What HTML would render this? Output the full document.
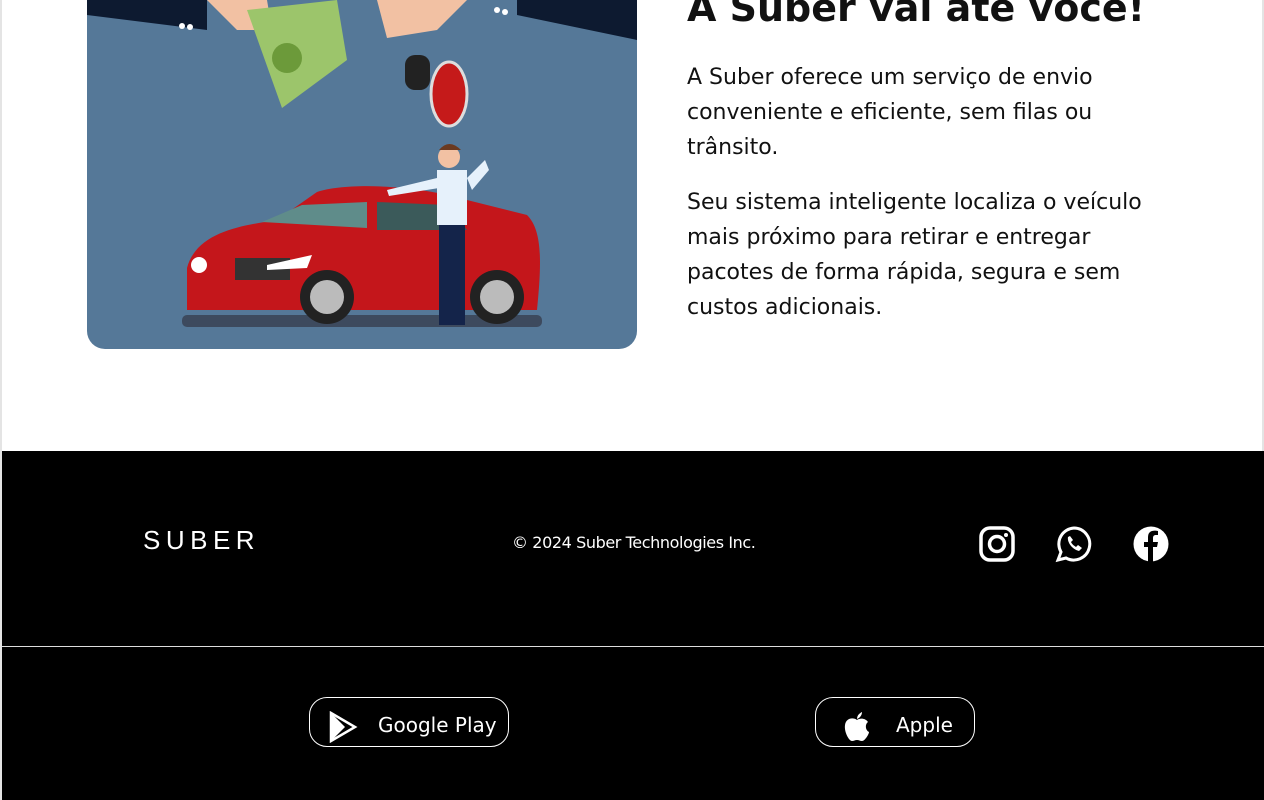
<!DOCTYPE html>
<html><head><meta charset="utf-8"><style>
*{margin:0;padding:0;box-sizing:border-box}
body{width:1264px;height:800px;overflow:hidden;background:#fff;font-family:"DejaVu Sans","Liberation Sans",sans-serif;position:relative}
.edge{position:absolute;top:0;bottom:0;width:2px;background:#e4e4e4}
.img{position:absolute;left:87px;top:-10px;width:550px;height:359px;border-radius:0 0 18px 18px;background:#557898;overflow:hidden}
h1{position:absolute;left:687px;top:-14px;font-size:38px;font-weight:bold;color:#111;white-space:nowrap}
p{position:absolute;left:687px;width:470px;font-size:22px;line-height:35px;color:#111}
footer{position:absolute;left:2px;right:0;top:451px;height:349px;background:#000}
.line{position:absolute;left:0;right:0;top:195px;height:1px;background:#ddd}
.logo{position:absolute;left:141px;top:74px;color:#fff;font-family:"Liberation Sans",sans-serif;font-size:26px;letter-spacing:5.5px}
.copy{position:absolute;left:510px;top:82px;color:#fff;font-size:16px;letter-spacing:-.4px}
.btn{position:absolute;top:246px;height:50px;border:1px solid #fff;border-radius:18px;color:#fff;font-size:20px}
.btn span{position:absolute;top:15px;white-space:nowrap}
</style></head><body>
<div class="edge" style="left:0"></div><div class="edge" style="right:0"></div>
<div class="img"><svg width="550" height="359" viewBox="0 -10 550 359">
<polygon points="0,0 120,0 120,30 0,15" fill="#0d1a30"/><polygon points="430,0 550,0 550,40 430,15" fill="#0d1a30"/>
<circle cx="95" cy="26" r="3" fill="#fff"/><circle cx="103" cy="27" r="3" fill="#fff"/><circle cx="410" cy="10" r="3" fill="#fff"/><circle cx="418" cy="12" r="3" fill="#fff"/>
<path d="M120,0 L180,0 L185,30 L150,30 Z" fill="#f2c1a3"/><path d="M160,10 L250,0 L260,60 L195,108 Z" fill="#9cc56b"/><circle cx="200" cy="58" r="15" fill="#6c9a3a"/>
<path d="M290,0 L380,0 L350,30 L300,38 Z" fill="#f2c1a3"/>
<rect x="318" y="55" width="25" height="35" rx="10" fill="#222"/><ellipse cx="362" cy="94" rx="18" ry="32" fill="#c51a1a" stroke="#ddd" stroke-width="3"/>
<path d="M100,268 C110,230 160,225 190,220 L230,192 C260,182 330,185 380,200 L440,215 C455,230 455,260 450,310 L100,310 Z" fill="#c4161b"/>
<path d="M175,222 L215,205 L280,202 L280,228 Z" fill="#5f8c8a"/><path d="M290,202 L360,205 L380,230 L290,230Z" fill="#3b5a5a"/>
<rect x="148" y="258" width="55" height="22" fill="#333"/><ellipse cx="112" cy="265" rx="8" ry="8" fill="#fff"/><path d="M180,265 L225,255 L220,268 L180,270Z" fill="#fff"/>
<rect x="95" y="315" width="360" height="12" rx="5" fill="#3d4a5e"/>
<circle cx="240" cy="297" r="27" fill="#222"/><circle cx="240" cy="297" r="17" fill="#bbb"/><circle cx="410" cy="297" r="27" fill="#222"/><circle cx="410" cy="297" r="17" fill="#bbb"/>
<rect x="350" y="170" width="30" height="55" fill="#e6f1fb"/><circle cx="362" cy="157" r="11" fill="#f2c1a3"/><path d="M352,150 Q362,138 374,150 Z" fill="#6b3a20"/>
<rect x="352" y="225" width="26" height="100" fill="#14244a"/><path d="M300,190 L350,178 L352,188 L302,196Z" fill="#e6f1fb"/><path d="M380,178 L398,160 L402,170 L385,190Z" fill="#e6f1fb"/>
</svg></div>
<h1>A Suber vai até você!</h1>
<p style="top:60px">A Suber oferece um serviço de envio conveniente e eficiente, sem filas ou trânsito.</p>
<p style="top:185px">Seu sistema inteligente localiza o veículo mais próximo para retirar e entregar pacotes de forma rápida, segura e sem custos adicionais.</p>
<footer>
<div class="logo">SUBER</div>
<div class="copy">© 2024 Suber Technologies Inc.</div>
<svg style="position:absolute;left:976px;top:74px" width="38" height="38" viewBox="0 0 38 38"><rect x="3" y="3" width="32" height="32" rx="9" fill="none" stroke="#fff" stroke-width="3.5"/><circle cx="19" cy="19" r="7.5" fill="none" stroke="#fff" stroke-width="3.5"/><circle cx="28" cy="10" r="2" fill="#fff"/></svg>
<svg style="position:absolute;left:1053px;top:74px" width="38" height="38" viewBox="0 0 38 38"><path d="M19,3 A16,16 0 1 1 11,33 L3,35 L6,27 A16,16 0 0 1 19,3Z" fill="none" stroke="#fff" stroke-width="3"/><path d="M13,12 C12,16 16,24 24,26 L27,23 L23,20 L21,22 C18,20 17,19 16,17 L18,15 L15,11Z" fill="#fff"/></svg>
<svg style="position:absolute;left:1130px;top:74px" width="38" height="38" viewBox="0 0 38 38"><circle cx="19" cy="19" r="17.5" fill="#fff"/><path d="M21,37 L21,22 L25,22 L26,17 L21,17 L21,13 C21,11 22,10 24,10 L26,10 L26,6 C24,5.5 22,5.5 20,6 C17,7 16,9 16,13 L16,17 L12,17 L12,22 L16,22 L16,37Z" fill="#000"/></svg>
<div class="line"></div>
<div class="btn" style="left:307px;width:200px"><svg style="position:absolute;left:18px;top:13px" width="30" height="32" viewBox="0 0 30 32"><path d="M3,2 L27,16 L3,30 Z" fill="none" stroke="#fff" stroke-width="2.5"/><path d="M3,2 L17,16 L3,30" fill="#fff"/></svg><span style="left:68px">Google Play</span></div>
<div class="btn" style="left:813px;width:160px"><svg style="position:absolute;left:26px;top:13px" width="30" height="32" viewBox="0 0 30 32"><path d="M15,9 C11,6 4,7 3,14 C2,21 7,30 10,30 C12,30 13,29 15,29 C17,29 18,30 20,30 C23,30 27,23 27,21 C23,19 23,13 26,11 C23,7 18,7 15,9Z" fill="#fff"/><path d="M15,8 C15,4 18,2 20,1 C20,4 18,7 15,8Z" fill="#fff"/></svg><span style="left:80px">Apple</span></div>
</footer>
</body></html>
